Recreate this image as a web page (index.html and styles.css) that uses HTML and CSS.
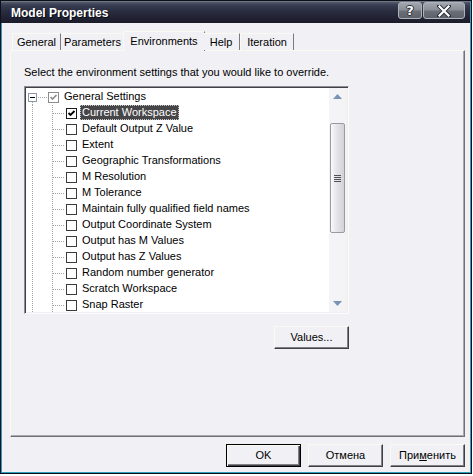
FILE: index.html
```html
<!DOCTYPE html>
<html>
<head>
<meta charset="utf-8">
<link rel="stylesheet" href="styles.css">
</head>
<body>
<div class="window">
  <div class="titlebar">
    <span class="title">Model Properties</span>
    <div class="caption-btns">
      <div class="cbtn cbtn-help">?</div>
      <div class="cbtn cbtn-close">
        <svg width="14" height="12" viewBox="0 0 14 12"><path d="M2 1 L12 11 M12 1 L2 11" stroke="#2a2d36" stroke-width="4" stroke-linecap="square"/><path d="M2.5 1.5 L11.5 10.5 M11.5 1.5 L2.5 10.5" stroke="#fff" stroke-width="2.2" stroke-linecap="square"/></svg>
      </div>
    </div>
  </div>
  <div class="client">
    <div class="tabs">
      <div class="tab t-general">General</div>
      <div class="tab t-params">Parameters</div>
      <div class="tab t-env active">Environments</div>
      <div class="tab t-help">Help</div>
      <div class="tab t-iter">Iteration</div>
    </div>
    <div class="panel">
      <p class="caption">Select the environment settings that you would like to override.</p>
      <div class="tree">
        <div class="tree-list">
          <div class="row root">
            <span class="expander"><span class="minus"></span></span>
            <span class="hline hline-root"></span>
            <span class="cb grey"><svg width="9" height="9" viewBox="0 0 9 9"><path d="M1.5 4 L3.5 6 L7.5 2" fill="none" stroke="#8c8c8c" stroke-width="1.7"/></svg></span>
            <span class="label">General Settings</span>
          </div>
          <div class="row child">
            <span class="hline"></span>
            <span class="cb dark"><svg width="9" height="9" viewBox="0 0 9 9"><path d="M1.5 4 L3.5 6 L7.5 2" fill="none" stroke="#000" stroke-width="1.8"/></svg></span>
            <span class="label selected">Current Workspace</span>
          </div>
          <div class="row child"><span class="hline"></span><span class="cb"></span><span class="label">Default Output Z Value</span></div>
          <div class="row child"><span class="hline"></span><span class="cb"></span><span class="label">Extent</span></div>
          <div class="row child"><span class="hline"></span><span class="cb"></span><span class="label">Geographic Transformations</span></div>
          <div class="row child"><span class="hline"></span><span class="cb"></span><span class="label">M Resolution</span></div>
          <div class="row child"><span class="hline"></span><span class="cb"></span><span class="label">M Tolerance</span></div>
          <div class="row child"><span class="hline"></span><span class="cb"></span><span class="label">Maintain fully qualified field names</span></div>
          <div class="row child"><span class="hline"></span><span class="cb"></span><span class="label">Output Coordinate System</span></div>
          <div class="row child"><span class="hline"></span><span class="cb"></span><span class="label">Output has M Values</span></div>
          <div class="row child"><span class="hline"></span><span class="cb"></span><span class="label">Output has Z Values</span></div>
          <div class="row child"><span class="hline"></span><span class="cb"></span><span class="label">Random number generator</span></div>
          <div class="row child"><span class="hline"></span><span class="cb"></span><span class="label">Scratch Workspace</span></div>
          <div class="row child"><span class="hline"></span><span class="cb"></span><span class="label">Snap Raster</span></div>
          <div class="row child stub"></div>
        </div>
        <div class="scrollbar">
          <div class="sb-arrow"><svg width="9" height="5" viewBox="0 0 9 5"><path d="M0 5 L4.5 0 L9 5 Z" fill="#7a93b2"/></svg></div>
          <div class="sb-track">
            <div class="sb-thumb">
              <div class="grip"></div><div class="grip"></div><div class="grip"></div><div class="grip"></div>
            </div>
          </div>
          <div class="sb-arrow"><svg width="9" height="5" viewBox="0 0 9 5"><path d="M0 0 L4.5 5 L9 0 Z" fill="#7a93b2"/></svg></div>
        </div>
      </div>
      <div class="values-row">
        <button class="btn">Values...</button>
      </div>
    </div>
    <div class="footer">
      <button class="btn default">OK</button>
      <button class="btn">Отмена</button>
      <button class="btn">При<u>м</u>енить</button>
    </div>
  </div>
</div>
</body>
</html>
```
FILE: styles.css
```css
html, body {
  margin: 0;
  padding: 0;
  background: #ffffff;
}
body {
  font-family: "Liberation Sans", Arial, sans-serif;
  font-size: 11px;
  color: #000;
}
.window {
  width: 472px;
  height: 474px;
  box-sizing: border-box;
  border: 1px solid #0d0f1a;
  display: flex;
  flex-direction: column;
  background: #f1f1f5;
}
.titlebar {
  height: 22px;
  flex: none;
  display: flex;
  align-items: flex-start;
  justify-content: space-between;
  background: linear-gradient(to bottom, #8d93a0 0, #555a6a 1px, #3a3e52 4px, #2a2d40 10px, #1f2132 18px, #1a1c2b 22px);
  border-right: 1px solid #2c9fbe;
}
.title {
  font-weight: bold;
  font-size: 12px;
  color: #ffffff;
  margin: 5px 0 0 10px;
  line-height: 14px;
  text-shadow: 1px 1px 0 #0a0b12;
}
.caption-btns {
  display: flex;
  gap: 1px;
  margin: 1px 5px 0 0;
}
.cbtn {
  height: 17px;
  box-sizing: border-box;
  border: 1px solid #aeb2ba;
  border-radius: 3px;
  background: linear-gradient(to bottom, #a2a6ae 0, #8a8e97 45%, #6a6e77 55%, #5d616a 100%);
  display: flex;
  align-items: center;
  justify-content: center;
  color: #fff;
  font-weight: bold;
}
.cbtn-help {
  width: 24px;
  font-size: 13px;
  font-family: "DejaVu Sans", sans-serif;
  text-shadow: 1px 0 #2a2d36, -1px 0 #2a2d36, 0 1px #2a2d36, 0 -1px #2a2d36;
}
.cbtn-close {
  width: 42px;
}
.client {
  flex: 1;
  display: flex;
  flex-direction: column;
  border: solid #2c9fbe;
  border-width: 0 1px 1px 1px;
  padding: 8px 5px 0 8px;
}
.tabs {
  display: flex;
  align-items: flex-end;
  height: 19px;
  padding-left: 2px;
  position: relative;
  z-index: 1;
}
.tab {
  height: 17px;
  box-sizing: border-box;
  padding: 1px 0 0;
  text-align: center;
  line-height: 15px;
  border-top: 1px solid #fbfaf0;
  border-left: 1px solid #fbfaf0;
  border-right: 1px solid #7a7a80;
  background: #f1f1f5;
  white-space: nowrap;
}
.t-general { width: 49px; }
.t-params { width: 64px; border-left: none; }
.t-env { width: 82px; }
.t-help { width: 37px; border-left: none; }
.t-iter { width: 54px; }
.tab.active {
  height: 20px;
  margin: 0 -2px -1px -2px;
  line-height: 16px;
  border-right: 1px solid #7a7a80;
}
.panel {
  height: 387px;
  box-sizing: border-box;
  border: 1px solid;
  border-color: #fbfaf0 #707076 #707076 #fbfaf0;
  box-shadow: inset -1px -1px 0 #a8a8b0;
  padding: 15px 0 0 13px;
  display: flex;
  flex-direction: column;
  align-items: flex-start;
}
.caption {
  margin: 0;
  line-height: 13px;
}
.tree {
  margin-top: 7px;
  width: 325px;
  height: 228px;
  box-sizing: border-box;
  border: 1px solid;
  border-color: #8e8e96 #fbfbfb #fbfbfb #8e8e96;
  box-shadow: inset 1px 1px 0 #404048, inset -1px -1px 0 #f0f0f4;
  background: #ffffff;
  display: flex;
  padding: 1px;
  overflow: hidden;
}
.tree-list {
  flex: 1;
  padding-top: 1px;
  overflow: hidden;
}
.row {
  height: 16px;
  display: flex;
  align-items: flex-start;
  white-space: nowrap;
  --dot: #a4a4a8;
}
.row.root {
  padding-left: 2px;
  background: repeating-linear-gradient(to bottom, var(--dot) 0 1px, transparent 1px 2px) 6px 13px / 1px 3px no-repeat;
}
.row.child {
  padding-left: 27px;
  background:
    repeating-linear-gradient(to bottom, var(--dot) 0 1px, transparent 1px 2px) 6px 0 / 1px 16px no-repeat,
    repeating-linear-gradient(to bottom, var(--dot) 0 1px, transparent 1px 2px) 26px 0 / 1px 16px no-repeat;
}
.expander {
  width: 9px;
  height: 9px;
  box-sizing: border-box;
  margin-top: 4px;
  border: 1px solid #8f96a8;
  background: #fff;
  display: flex;
  align-items: center;
  justify-content: center;
}
.minus {
  width: 5px;
  height: 1px;
  background: #000;
}
.hline {
  width: 12px;
  height: 1px;
  margin-top: 8px;
  margin-right: 1px;
  background: repeating-linear-gradient(to right, var(--dot) 0 1px, transparent 1px 2px);
}
.hline-root {
  width: 10px;
  margin-right: 0;
  margin-left: 1px;
}
.cb {
  width: 11px;
  height: 11px;
  box-sizing: border-box;
  margin-top: 3px;
  border: 1px solid #3a3a3e;
  background: #fff;
  display: flex;
  align-items: center;
  justify-content: center;
  flex: none;
}
.cb.grey {
  border-color: #8c8c90;
}
.cb.dark {
  border-color: #1a1a1a;
}
.label {
  margin-left: 3px;
  padding: 0 2px;
  height: 15px;
  line-height: 15px;
  box-sizing: border-box;
}
.label.selected {
  background: #464648;
  color: #fff;
  outline: 1px dotted #c8c8c8;
  outline-offset: -1px;
}
.scrollbar {
  width: 17px;
  flex: none;
  display: flex;
  flex-direction: column;
  background: #f4f4f7;
  border-right: 1px solid #f6f3e2;
}
.sb-arrow {
  height: 17px;
  flex: none;
  display: flex;
  align-items: center;
  justify-content: center;
}
.sb-track {
  flex: 1;
  padding-top: 18px;
}
.sb-thumb {
  margin-left: 1px;
  width: 15px;
  height: 110px;
  box-sizing: border-box;
  border: 1px solid #9a9aa2;
  border-radius: 2px;
  background: linear-gradient(to right, #fafafc 0, #e6e6ea 40%, #d2d2d8 100%);
  display: flex;
  flex-direction: column;
  align-items: center;
  justify-content: center;
  gap: 1px;
}
.grip {
  width: 7px;
  height: 1px;
  background: #505058;
}
.values-row {
  align-self: stretch;
  display: flex;
  justify-content: flex-start;
  padding-left: 250px;
  margin-top: 12px;
}
.btn {
  width: 75px;
  height: 23px;
  box-sizing: border-box;
  padding: 0;
  font-family: "Liberation Sans", Arial, sans-serif;
  font-size: 11px;
  color: #000;
  background: #f1f1f5;
  border: 1px solid;
  border-color: #fbfaf0 #404040 #404040 #fbfaf0;
  box-shadow: inset -1px -1px 0 #808088;
  line-height: 19px;
}
.btn.default {
  border: 1px solid #000;
  box-shadow: inset 1px 1px 0 #fbfaf0, inset -1px -1px 0 #404040, inset -2px -2px 0 #808088;
}
.footer {
  display: flex;
  justify-content: flex-end;
  gap: 7px;
  margin-top: 7px;
}
```
